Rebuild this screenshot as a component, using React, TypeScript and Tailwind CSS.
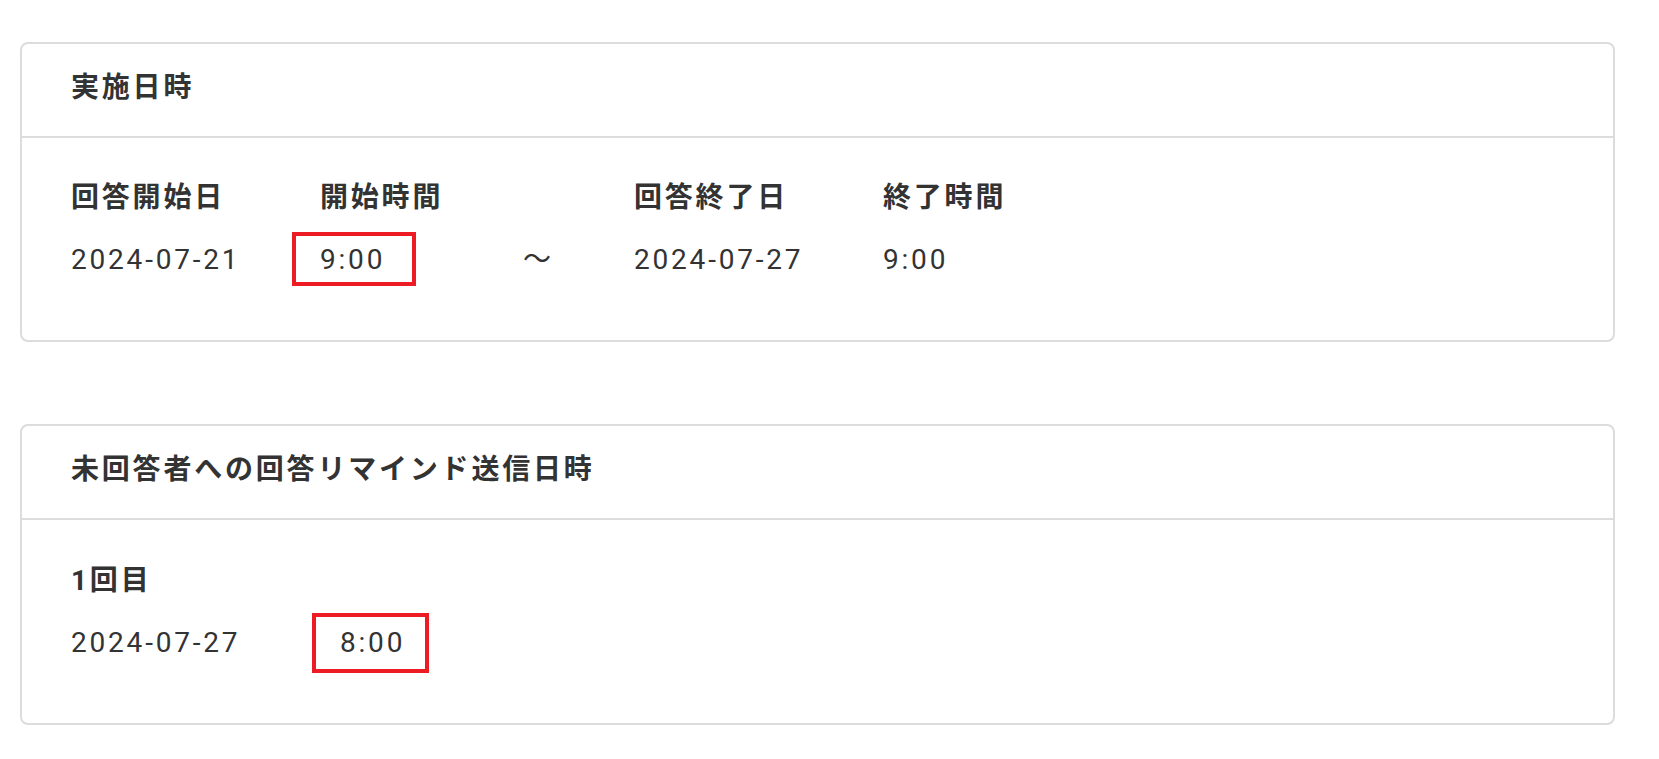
import React from "react";

const font = { fontFamily: '' };

function TimeMark({ children, l, r, t, b }: { children: React.ReactNode; l: string; r: string; t: string; b: string }) {
  return (
    <span className="relative inline-block">
      {children}
      <span className={`pointer-events-none absolute border-4 border-[#ed1c24] ${l} ${r} ${t} ${b}`} />
    </span>
  );
}

export default function App() {
  return (
    <div className="min-h-screen bg-white pt-[42px] pl-[20px] pr-[44px] text-[#333333] font-['Roboto','Noto_Sans_CJK_JP',sans-serif] text-[28px] leading-[40px] tracking-[0.1em]">
      <section className="rounded-[8px] border-2 border-[#dcdcdc]">
        <header className="flex h-[94px] items-center border-b-2 border-[#dcdcdc] pl-[49px] pb-[4px]">
          <h2 className="font-bold">実施日時</h2>
        </header>
        <div className="grid grid-cols-[249px_203px_111px_249px_1fr] gap-y-[22px] pl-[49px] pt-[40px] pb-[60px]">
          <div className="font-bold">回答開始日</div>
          <div className="font-bold">開始時間</div>
          <div />
          <div className="font-bold">回答終了日</div>
          <div className="font-bold">終了時間</div>
          <div>2024-07-21</div>
          <div>
            <TimeMark l="left-[-28px]" r="right-[-31px]" t="top-[-8px]" b="bottom-[-6px]">9:00</TimeMark>
          </div>
          <div>〜</div>
          <div>2024-07-27</div>
          <div>9:00</div>
        </div>
      </section>

      <section className="mt-[82px] rounded-[8px] border-2 border-[#dcdcdc]">
        <header className="flex h-[94px] items-center border-b-2 border-[#dcdcdc] pl-[49px] pb-[4px]">
          <h2 className="font-bold">未回答者への回答リマインド送信日時</h2>
        </header>
        <div className="grid grid-cols-[269px_1fr] gap-y-[22px] pl-[49px] pt-[41px] pb-[60px]">
          <div className="col-span-2 font-bold">1回目</div>
          <div>2024-07-27</div>
          <div>
            <TimeMark l="left-[-28px]" r="right-[-24px]" t="top-[-10px]" b="bottom-[-10px]">8:00</TimeMark>
          </div>
        </div>
      </section>
    </div>
  );
}
